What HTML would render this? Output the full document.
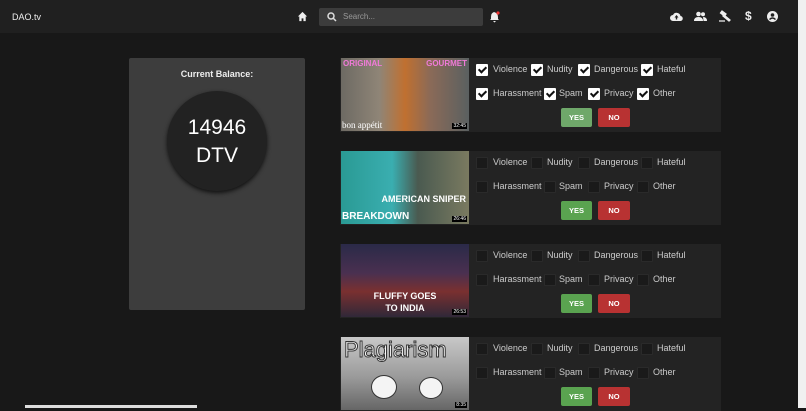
<html><head><style>
body{margin:0;width:806px;height:408px;overflow:hidden;background:#181818;font-family:"Liberation Sans",sans-serif;color:#ddd;position:relative}
.a{position:absolute}
.nav{left:0;top:0;width:798px;height:33px;background:#202020}
.card{left:340px;width:381px;height:74px;background:#232323}
.th{left:1px;top:0;width:128px;height:73px}
.cb{position:absolute;width:10px;height:10px;border:1px solid #2a2a2a;background:#1a1a1a;border-radius:1px}
.cb.on{background:#fff;border-color:#fff}
.cb.on:after{content:"";position:absolute;left:3px;top:0px;width:3px;height:6px;border:solid #111;border-width:0 2px 2px 0;transform:rotate(45deg)}
.lb{position:absolute;font-size:9px;color:#ccc}
.btn{position:absolute;height:19px;font-size:7.5px;font-weight:bold;color:#fff;text-align:center;line-height:19px;border-radius:2px}
.dur{position:absolute;right:2px;bottom:2px;font-size:5px;background:#000;color:#fff;padding:0 1px}
</style></head><body>
<div class="a nav"></div>
<div class="a" style="left:12px;top:12px;font-size:9px;color:#eee">DAO.tv</div>
<svg class="a" style="left:297px;top:11px" width="11" height="11" viewBox="0 0 12 12"><path d="M6 1L1 6h1.5v5h2.5V8h2v3h2.5V6H11z" fill="#eee"/></svg>
<div class="a" style="left:319px;top:8px;width:164px;height:18px;background:#3c3c3c;border-radius:2px"></div>
<svg class="a" style="left:327px;top:12px" width="10" height="10" viewBox="0 0 10 10"><circle cx="4" cy="4" r="3" stroke="#ddd" stroke-width="1.5" fill="none"/><path d="M6 6l3 3" stroke="#ddd" stroke-width="1.5"/></svg>
<div class="a" style="left:343px;top:12px;font-size:8px;color:#999">Search...</div>
<svg class="a" style="left:489px;top:10px" width="12" height="13" viewBox="0 0 12 13"><path d="M5 2Q2 3 2 7v2L1 10h9L9 9V7Q9 3 5 2zM4 11h3l-1.5 1.5z" fill="#eee"/><circle cx="9" cy="3" r="1.6" fill="#e33"/></svg>
<svg class="a" style="left:670px;top:11px" width="13" height="11" viewBox="0 0 13 11"><path d="M3 10a3 3 0 010-6 4 4 0 017.5 1A2.5 2.5 0 0110 10z" fill="#eee"/><path d="M6.5 4l-2 2.5h1.3v2h1.4v-2h1.3z" fill="#202020"/></svg>
<svg class="a" style="left:694px;top:11px" width="13" height="11" viewBox="0 0 13 11"><circle cx="4.5" cy="3" r="2.3" fill="#eee"/><circle cx="9" cy="3.3" r="2" fill="#eee"/><path d="M0 10q0-4 4.5-4t4.5 4zM9 6q4 0 4 4h-3.5" fill="#eee"/></svg>
<svg class="a" style="left:718px;top:10px" width="13" height="12" viewBox="0 0 13 12"><path d="M4 1l4 3-1.5 2-4-3zM6 5l6 5-1 1-6-5z M1 11h6" stroke="#eee" stroke-width="1.3" fill="#eee"/></svg>
<div class="a" style="left:745px;top:9px;font-size:12px;color:#eee;font-weight:bold">$</div>
<svg class="a" style="left:767px;top:11px" width="11" height="11" viewBox="0 0 11 11"><circle cx="5.5" cy="5.5" r="5.5" fill="#eee"/><circle cx="5.5" cy="4" r="1.8" fill="#202020"/><path d="M2.5 8.5q3-3 6 0" stroke="#202020" stroke-width="1.4" fill="none"/></svg>
<div class="a" style="left:798px;top:0;width:8px;height:408px;background:#f0f0f0"></div>
<div class="a" style="left:25px;top:405px;width:172px;height:3px;background:#ddd"></div>

<div class="a" style="left:129px;top:58px;width:176px;height:252px;background:#3d3d3d;border-radius:2px"></div>
<div class="a" style="left:129px;top:69px;width:176px;text-align:center;font-size:9px;font-weight:bold;color:#eee">Current Balance:</div>
<div class="a" style="left:167px;top:91px;width:100px;height:100px;border-radius:50%;background:#222;box-shadow:0 2px 4px #111"></div>
<div class="a" style="left:167px;top:114px;width:100px;text-align:center;font-size:21px;line-height:28px;color:#fff">14946<br>DTV</div>

<div class="a card" style="top:58px">
 <div class="a th" style="background:linear-gradient(90deg,#6d6a63,#8f8577 30%,#c07030 50%,#8a6a58 70%,#5a6060)"><div style="position:absolute;left:2px;top:1px;font-size:8px;font-weight:bold;color:#f07ad8">ORIGINAL</div><div style="position:absolute;right:2px;top:1px;font-size:8px;font-weight:bold;color:#f07ad8">GOURMET</div><div style="position:absolute;left:1px;bottom:1px;font-size:9px;color:#fff;font-family:'Liberation Serif'">bon appétit</div><span class="dur">32:45</span></div>
</div>
<div class="a card" style="top:151px">
 <div class="a th" style="background:linear-gradient(90deg,#2a9a94,#3aaeb0 40%,#4a5a50 60%,#7a7a60)"><div style="position:absolute;right:3px;top:43px;font-size:9px;font-weight:bold;color:#fff">AMERICAN SNIPER</div><div style="position:absolute;left:1px;bottom:2px;font-size:10px;font-weight:bold;color:#fff">BREAKDOWN</div><span class="dur">26:46</span></div>
</div>
<div class="a card" style="top:244px">
 <div class="a th" style="background:linear-gradient(180deg,#2a2a48,#4a3050 40%,#7a3030 65%,#302838)"><div style="position:absolute;left:0;width:128px;top:46px;text-align:center;font-size:9px;font-weight:bold;color:#fff;line-height:12px">FLUFFY GOES<br>TO INDIA</div><span class="dur">26:53</span></div>
</div>
<div class="a card" style="top:337px">
 <div class="a th" style="background:linear-gradient(180deg,#c8c8c8,#9a9a9a 55%,#666)"><div style="position:absolute;left:3px;top:0px;font-size:22px;color:#fff;-webkit-text-stroke:1px #333">Plagiarism</div><div style="position:absolute;left:30px;top:38px;width:24px;height:22px;border-radius:50%;background:#f4f4f4;border:1px solid #333"></div><div style="position:absolute;left:78px;top:40px;width:22px;height:20px;border-radius:50%;background:#f4f4f4;border:1px solid #333"></div><span class="dur">8:35</span></div>
</div>

<div id="rows"></div>
<script>
var tops=[58,151,244,337],h='';
var r1=[[476,493,'Violence'],[531,547,'Nudity'],[578,594,'Dangerous'],[641,657,'Hateful']];
var r2=[[476,493,'Harassment'],[544,559,'Spam'],[588,604,'Privacy'],[637,653,'Other']];
tops.forEach(function(t,i){
 var on=i==0?' on':'';
 r1.forEach(function(c){h+='<div class="cb'+on+'" style="left:'+c[0]+'px;top:'+(t+6)+'px"></div><div class="lb" style="left:'+c[1]+'px;top:'+(t+6)+'px">'+c[2]+'</div>';});
 r2.forEach(function(c){h+='<div class="cb'+on+'" style="left:'+c[0]+'px;top:'+(t+30)+'px"></div><div class="lb" style="left:'+c[1]+'px;top:'+(t+30)+'px">'+c[2]+'</div>';});
 h+='<div class="btn" style="left:561px;top:'+(t+50)+'px;width:31px;background:'+(i==0?'#6fa86a':'#5aa350')+'">YES</div>';
 h+='<div class="btn" style="left:598px;top:'+(t+50)+'px;width:32px;background:#b83232">NO</div>';
});
document.getElementById('rows').innerHTML=h;
</script>
</body></html>
